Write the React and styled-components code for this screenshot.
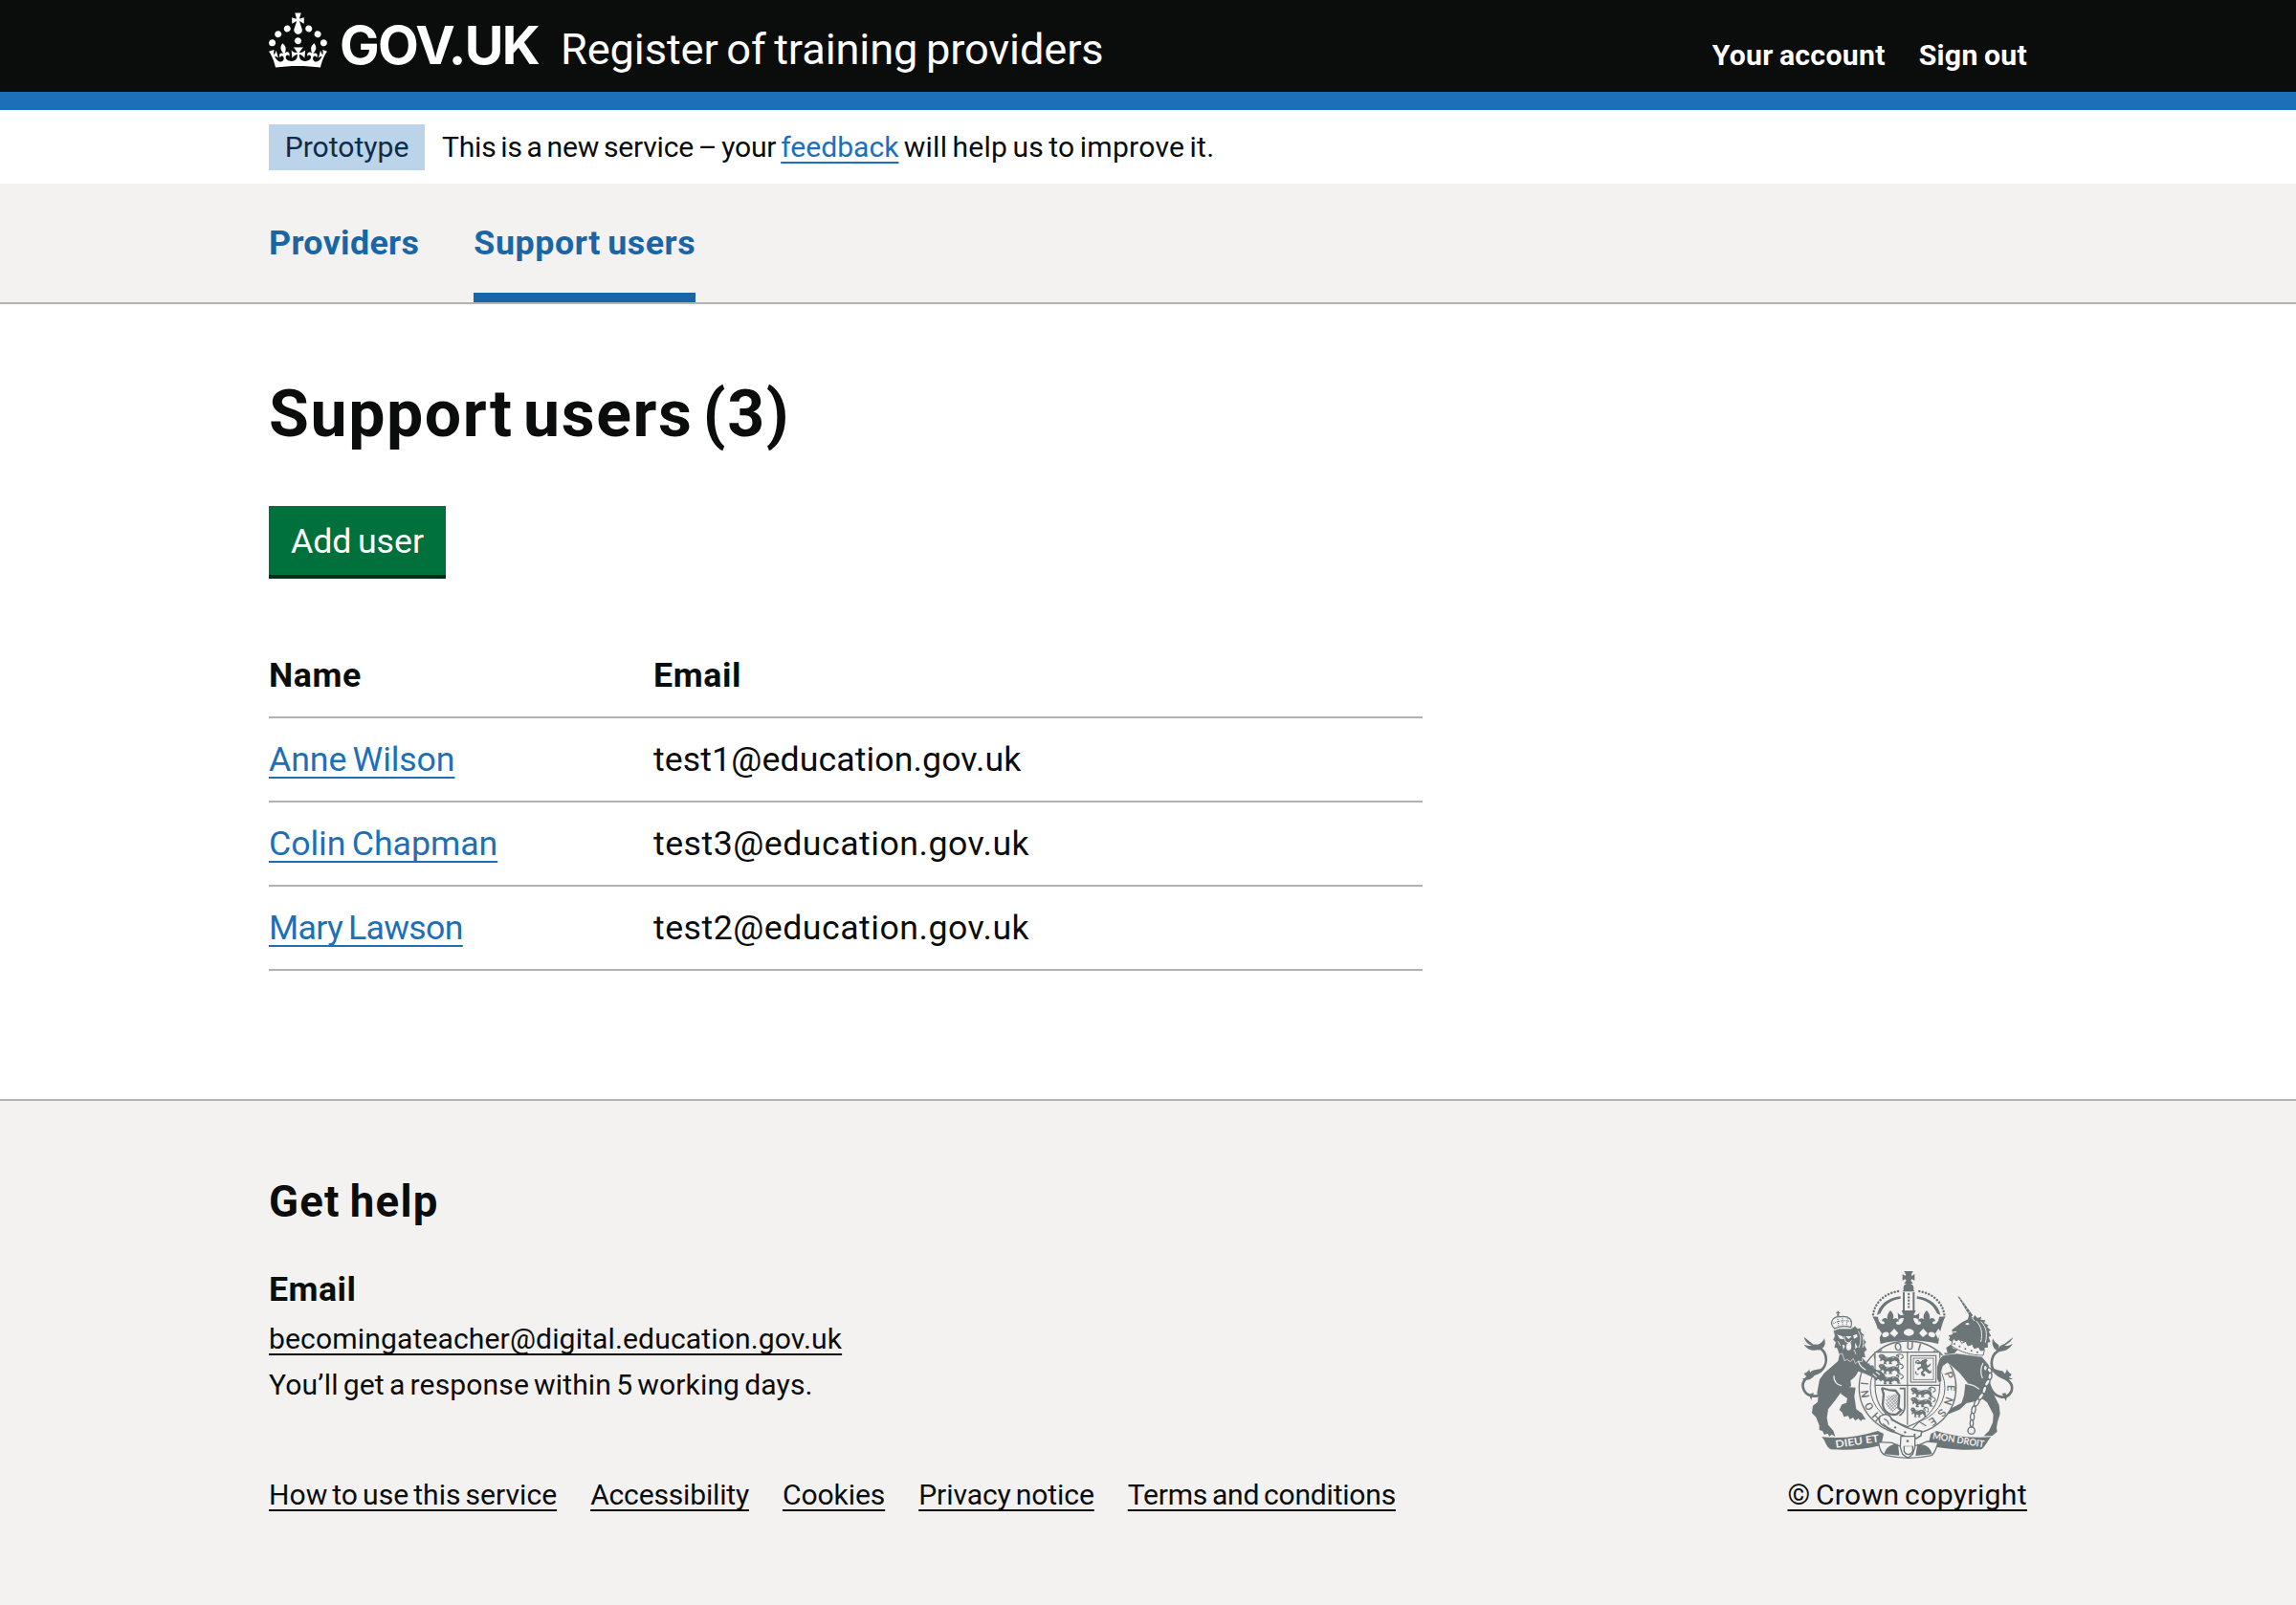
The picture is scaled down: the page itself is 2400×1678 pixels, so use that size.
import React from "react";
import styled, { createGlobalStyle, css } from "styled-components";

const colour = {
  black: "#0b0c0c",
  blue: "#1d70b8",
  navBlue: "#1a65a6",
  grey: "#f3f2f1",
  border: "#b1b4b6",
  green: "#00703c",
  crest: "#6c7578",
};

const GlobalStyle = createGlobalStyle`
  * { box-sizing: border-box; }
  body {
    margin: 0;
    background: #fff;
    color: ${colour.black};
    font-family: Roboto, "Liberation Sans", sans-serif;
    font-size: 30px;
    word-spacing: -0.08em;
    -webkit-font-smoothing: antialiased;
  }
  h1, h2, h3, p, ul { margin: 0; padding: 0; }
`;

const Page = styled.div`
  display: flex;
  flex-direction: column;
  min-height: 1678px;
`;

const Container = styled.div`
  width: 1838px;
  margin: 0 auto;
`;

const Header = styled.header`
  background: ${colour.black};
  color: #fff;
  border-bottom: 19px solid ${colour.blue};
`;

const HeaderRow = styled(Container)`
  display: flex;
  align-items: flex-start;
  height: 96px;
`;

const CrownIcon = styled.svg`
  width: 61px;
  height: 58px;
  margin-top: 13px;
  fill: #fff;
`;

const Logotype = styled.span`
  width: 227px;
  margin: 17px 0 0 13px;
  font: 700 55.6px/60px Inter, Roboto, sans-serif;
  letter-spacing: -1.6px;
  white-space: nowrap;
`;

const ServiceName = styled.span`
  margin-top: 22px;
  padding-left: 4px;
  font-size: 45.2px;
  line-height: 60px;
  letter-spacing: -0.12px;
  white-space: nowrap;
`;

const AccountNav = styled.nav`
  display: flex;
  gap: 35px;
  margin: 38px 0 0 auto;
  font-size: 30.2px;
  font-weight: 700;
  line-height: 40px;
  letter-spacing: 0.3px;
  word-spacing: -0.05em;
`;

const PhaseBanner = styled(Container)`
  display: flex;
  align-items: center;
  height: 77px;
  font-size: 30.1px;
`;

const Tag = styled.strong`
  width: 163px;
  margin-right: 18px;
  background: #bbd4ea;
  color: #0c2d4a;
  font-weight: 400;
  line-height: 48px;
  text-align: center;
`;

const Tracked = styled.span`
  letter-spacing: ${(p) => p.$track}px;
`;

const NavBar = styled.nav`
  background: ${colour.grey};
  border-bottom: 2px solid ${colour.border};
`;

const NavList = styled(Container)`
  display: flex;
  gap: 57px;
`;

const NavLink = styled.a`
  color: ${colour.navBlue};
  font-size: 35.8px;
  font-weight: 700;
  line-height: 124px;
  letter-spacing: ${(p) => (p.$current ? 0.55 : 0.35)}px;
  word-spacing: -0.06em;
  ${(p) => p.$current && css`box-shadow: inset 0 -10px ${colour.navBlue};`}
`;

const Link = styled.a`
  color: ${(p) => (p.$dark ? colour.black : colour.blue)};
  letter-spacing: ${(p) => p.$track ?? 0}px;
  text-decoration: underline;
  text-decoration-thickness: 2px;
  text-decoration-skip-ink: none;
  text-underline-offset: ${(p) => p.$offset ?? 5}px;
  white-space: nowrap;
`;

const Main = styled(Container)`
  padding: 78px 0 134px;
`;

const Title = styled.h1`
  font-size: 68px;
  font-weight: 700;
  line-height: 75px;
  letter-spacing: 1.6px;
  word-spacing: -0.12em;
`;

const Button = styled.button`
  display: block;
  width: 185px;
  height: 72px;
  margin: 58px 0 62px;
  padding: 2px 0 0;
  border: 0;
  background: ${colour.green};
  box-shadow: 0 4px 0 #002d18;
  color: #fff;
  font-family: inherit;
  font-size: 35.7px;
  word-spacing: inherit;
`;

const Table = styled.div`
  width: 1206px;
`;

const Row = styled.div`
  display: grid;
  grid-template-columns: 402px 1fr;
  height: 88px;
  border-bottom: 2px solid ${colour.border};
  font-size: 35.7px;
  line-height: 86px;
`;

const HeadCell = styled.span`
  font-weight: 700;
  letter-spacing: 0.6px;
`;

const Footer = styled.footer`
  flex: 1;
  background: ${colour.grey};
  border-top: 2px solid ${colour.border};
`;

const FooterRow = styled(Container)`
  display: flex;
  justify-content: space-between;
  align-items: flex-end;
  padding-top: 81px;
  font-size: 30.1px;
  line-height: 48px;
`;

const HelpTitle = styled.h2`
  font-size: 45.6px;
  line-height: 50px;
  letter-spacing: 1.2px;
  margin-bottom: 41px;
`;

const HelpSubtitle = styled.h3`
  font-size: 35.7px;
  line-height: 50px;
  letter-spacing: 0.5px;
  margin-bottom: 3px;
`;

const HelpText = styled.p`
  letter-spacing: 0.1px;
`;

const FooterLinks = styled.div`
  display: flex;
  gap: 35px;
  margin-top: 67px;
`;

const Copyright = styled.div`
  display: flex;
  flex-direction: column;
  align-items: center;
  gap: 9px;
`;

const CrestSvg = styled.svg`
  display: block;
  width: 230px;
  height: 205px;
`;

const Crown = () => (
  <CrownIcon viewBox="0 0 32 30" aria-hidden="true">
    <path d="M22.6 10.4c-1 .4-2-.1-2.4-1-.4-.9.1-2 1-2.4.9-.4 2 .1 2.4 1s-.1 2-1 2.4m-5.9 6.7c-.9.4-2-.1-2.4-1-.4-.9.1-2 1-2.4.9-.4 2 .1 2.4 1s-.1 2-1 2.4m10.8-3.7c-1 .4-2-.1-2.4-1-.4-.9.1-2 1-2.4.9-.4 2 .1 2.4 1s0 2-1 2.4m3.3 4.8c-1 .4-2-.1-2.4-1-.4-.9.1-2 1-2.4.9-.4 2 .1 2.4 1s-.1 2-1 2.4M17 4.7l2.3 1.2V2.5l-2.3.7-.2-.2.9-3h-3.4l.9 3-.2.2c-.1.1-2.3-.7-2.3-.7v3.4L15 4.7c.1.1.1.2.2.2l-1.3 4c-.1.2-.1.4-.1.6 0 1.1.8 2 1.9 2.2h.7c1-.2 1.9-1.1 1.9-2.1 0-.2 0-.4-.1-.6l-1.3-4c-.1-.2 0-.2.1-.3m-7.6 5.7c.9.4 2-.1 2.4-1 .4-.9-.1-2-1-2.4-.9-.4-2 .1-2.4 1s0 2 1 2.4m-5 3c.9.4 2-.1 2.4-1 .4-.9-.1-2-1-2.4-.9-.4-2 .1-2.4 1s.1 2 1 2.4m-3.2 4.8c.9.4 2-.1 2.4-1 .4-.9-.1-2-1-2.4-.9-.4-2 .1-2.4 1s0 2 1 2.4m14.8 11c4.4 0 8.6.3 12.3.8 1.1-4.5 2.4-7 3.7-8.8l-2.5-.9c.2 1.3.3 1.9 0 2.7-.4-.4-.8-1.1-1.1-2.3l-1.2 4c.7-.5 1.3-.8 2-.9-1.1 2.5-2.6 3.1-3.5 3-1.1-.2-1.7-1.2-1.5-2.1.3-1.2 1.5-1.5 2.1-.1 1.1-2.3-.8-3-2-2.3 1.9-1.9 2.1-3.5.6-5.6-2.1 1.6-2.1 3.2-1.2 5.5-1.2-1.4-3.2-.6-2.5 1.6.9-1.4 2.1-.5 1.9.8-.2 1.1-1.7 2.1-3.5 1.9-2.7-.2-2.9-2.1-2.9-3.6.7-.1 1.9.5 2.9 1.9l.4-4.3c-1.1 1.1-2.1 1.4-3.2 1.4.4-1.2 2.1-3 2.1-3h-5.4s1.7 1.9 2.1 3c-1.1 0-2.1-.2-3.2-1.4l.4 4.3c1-1.4 2.2-2 2.9-1.9-.1 1.5-.2 3.4-2.9 3.6-1.9.2-3.4-.8-3.5-1.9-.2-1.3 1-2.2 1.9-.8.7-2.3-1.2-3-2.5-1.6.9-2.2.9-3.9-1.2-5.5-1.5 2-1.3 3.7.6 5.6-1.2-.7-3.1 0-2 2.3.6-1.4 1.8-1.1 2.1.1.2.9-.3 1.9-1.5 2.1-.9.2-2.4-.5-3.5-3 .6 0 1.2.3 2 .9l-1.2-4c-.3 1.1-.7 1.9-1.1 2.3-.3-.8-.2-1.4 0-2.7l-2.9.9C1.3 23 2.6 25.5 3.7 30c3.7-.5 7.9-.8 12.3-.8" />
  </CrownIcon>
);

const fg = colour.crest;
const bg = colour.grey;

/* One passant lion of the English quarters. */
const Passant = ({ x, y, narrow }) => (
  <g transform={`translate(${x} ${y}) scale(${narrow ? 0.72 : 1} 1.1)`}>
    <path
      fill={fg}
      stroke={fg}
      d="M1 5l5-4 7 0 6 2 3 5 12 2 12-3 10 1 8 5 3 6-2 4 6 3-10 1-2-6-7-3-9 3-3 4 4 3h-10l1-7-8-1-4 5 4 3h-10l2-7-5-5-6 4-3-2 4-4-4-2z"
    />
    <path fill="none" stroke={fg} strokeWidth="3.200" d="M60 10c8-1 4-8-4-5 6-7 20-6 22 1 1 5-3 7-8 7" />
    <path fill="none" stroke={bg} strokeWidth="1.500" d="M7 5l5 2M24 12l7-1M44 11l7 0" />
  </g>
);

/* Crown above the garter. */
const RoyalCrown = () => (
  <g fill={fg}>
    <path fill={bg} d="M232 154c4-45 50-82 116-84 66 2 112 39 116 84l-18 54-6 30c-62-13-123-13-184 0l-6-30z" />
    <path d="M334 12h28l-6 12 3 2 8-5v21l-8-5-4 4 7 10h-28l7-10-4-4-8 5V21l8 5 3-2z" />
    <path d="M332 64c0-18 32-18 32 0v8l4 4h-40l4-4z" />
    <path d="M330 78h6v57h-6zM361 78h6v57h-6z" />
    <path fill="none" stroke={fg} strokeWidth="7" strokeDasharray="0.1 10" strokeLinecap="round" d="M348.500 84v50" />
    <path fill="none" stroke={fg} strokeWidth="7.500" strokeDasharray="0.1 10.300" strokeLinecap="round" d="M237 148c5-38 38-70 87-74M460 148c-5-38-38-70-87-74" />
    <path d="M249 150c5-30 32-55 74-59v7c-31 4-53 20-63 46zM448 150c-5-30-32-55-74-59v7c31 4 53 20 63 46z" />
    <path d="M232 154l20 1c2 16 9 25 20 22 3-6-2-9-8-8 2-11 13-12 18-6-3-12 3-20 9-28 8 8 13 17 8 28 7-6 17-4 19 7-7-2-11 2-8 8 9 5 21-1 23-18-6-3-12-1-17 6l-2-24c5 8 11 9 18 8l-6-15h45l-7 15c8 1 14-1 18-8l-2 24c-5-7-10-9-17-6 2 17 14 23 23 18 3-6-1-10-8-8 2-11 12-13 19-7-5-11 0-20 8-28 7 8 12 17 9 28 5-6 16-5 18 6-6-1-11 2-8 8 11 3 18-6 20-22l20-1c-8 14-12 30-18 54l-5 32c-62-15-123-15-181 0l-5-32c-5-24-12-40-20-54z" />
    <g fill={bg}>
      <path d="M254 192l10 15-9 18-9-20zM442 192l-10 15 9 18 9-20zM303 192l13 14-12 13-15-12zM394 192l-13 14 12 13 15-12z" />
      <ellipse cx="276" cy="211" rx="11" ry="8" transform="rotate(-20 276 211)" />
      <ellipse cx="349" cy="204" rx="16" ry="11" />
      <ellipse cx="421" cy="211" rx="11" ry="8" transform="rotate(20 421 211)" />
    </g>
  </g>
);

/* Lion supporter with its tail. */
const Lion = () => (
  <g>
    <path fill="none" stroke={fg} strokeWidth="8" d="M84 388c-22 26-58 18-66-8-7-23 8-36 36-46 30-12 39-34 34-56-3-14-13-23-26-28" />
    <path fill={fg} d="M20 218c4 16 14 24 26 28-10 1-18-1-26-4 11 17 27 21 45 17l13-5c-5-11-17-14-28-12zM66 260c16-6 25-15 18-38-4 12-13 17-22 21zM14 348c9 7 27 8 40-10-11-3-18-11-17-20-3 9-9 12-17 15 3 6 7 9 12 11-6 4-12 5-18 4zM34 338c21 3 42-1 54-28-15 12-32 10-44 15zM40 396c-3 8-1 16 4 20-1-9 4-15 8-22z" />
    <path fill={fg} d="M134 262l62 14 20 22 28 22 16 4 14 14-2 14-8-6-2 10-10-6-6 6-8-10-30-14-18-6c-6 14-14 22-24 29l2 18-24 8-26 36-22 28-4 27 4 22 16 18 6 18-11-6-7 6-6-9-10 4-6-12-10-3 0-14-10-26-13-13 3-23 15-12 2-18-4-10 8-42 14-20 44-38z" />
    <path fill={fg} d="M132 373l50 4-4 28 6 40 18 13 12 20-10-2-5 6-9-8-9 7-7-10-10 6-5-11-14 3-5-14-9-8 8-17 14-5 3-14-20-14z" />
    <path fill="none" stroke={bg} strokeWidth="3.500" d="M114 340c-1 20 12 30 24 31M190 288c0 18 10 26 24 34M236 334l12 10M246 328l12 9" />
    <path fill={fg} stroke={bg} strokeWidth="2" d="M112 198l18-6 38 0 12-8 8 8 10-2 2 14 10 8-4 10 10 12-6 10 8 14-8 8 4 18-10-2-2 14-12-2-8 8-8-16-8 10-12-8-6 6-8-24-10 3-7-20-9 0 5-18-8-8 5-12z" />
    <path fill={bg} d="M124 211l16 5 6 9-13-1zM150 216l20 0-10 9zM166 234c6 18 2 28-9 26-6-5-6-14-2-20l4-3zM174 214l12-5 2 9-11 6zM140 242l9 3-5 14zM180 236l8 14-7 6z" />
    <path fill="none" stroke={bg} strokeWidth="2.500" d="M190 200c10 15 10 34 2 52M203 212c5 14 5 28 1 40M127 232l7 14M177 258l6 14M145 216l5 17 12 4 8-8" />
    <g fill="none" stroke={fg} strokeWidth="3.500">
      <path fill={bg} d="M116 192c-18-16-8-38 17-37 28-4 42 8 34 33-16-5-34-4-51 4z" />
      <path strokeDasharray="3 3" d="M141 158v26M126 162l3 24M157 160l-4 24M112 176c16-9 38-11 56-6" />
    </g>
    <path fill={fg} d="M123 152l2-8-4 1v-5l4 1-1-4h6l-1 4 4-1v5l-4-1 2 8z" />
  </g>
);

/* Unicorn supporter with collar, chain and tail. */
const Unicorn = () => (
  <g>
    <path fill="none" stroke={fg} strokeWidth="8" d="M604 376c14 36 52 40 66 14 9-23-5-36-29-46-28-13-36-34-31-56 4-17 14-25 28-29" />
    <path fill={fg} d="M676 219c-7 15-17 20-27 27 9 1 18-2 25-6-8 15-21 22-35 23l-11-4c4-13 13-16 21-19zM628 262c-15-6-20-20-16-39 5 12 13 14 20 22zM677 349c-12 6-28 3-38-9 10-4 17-12 17-22 3 9 8 14 15 17-1 4-5 8-9 9 6 4 11 5 15 5zM652 340c-20 0-37-8-46-29 13 11 28 11 39 15zM652 394c6 10 5 18 0 26-2-11-6-18-12-24z" />
    <path fill={fg} d="M502 91l6 2 42 58-8 6z" />
    <path fill="none" stroke={bg} strokeWidth="2" d="M506 104l7-6M513 113l7-6M520 123l7-6M527 133l7-6M534 143l7-6" />
    <path fill={fg} d="M484 196l32-24 18-9 4-15 12 11 6-9 8 9 12-4-2 9 15 2-4 8 14 8-5 5 12 10-7 4 8 14-8 3 6 16-9 2 1 15-10 1-4 20-34-6c-6-16-20-30-36-36l-14 2-12-2-4 3-9-6 4-7-5-6 13-4z" />
    <path fill="none" stroke={bg} strokeWidth="3" d="M560 168c16 15 21 38 15 66M575 170c18 18 20 40 14 66M547 158l8 10M484 204l14-2" />
    <path fill={bg} d="M526 178c4-5 10-5 13 0-4 3-9 4-13 0z" />
    <path fill={bg} stroke={fg} strokeWidth="3" d="M488 222l9 9 10-6 8 13 13-6 6 14 14-5 6 13 14-4 6 11 12-2-4 17c-38 0-70-10-100-30z" />
    <g fill={fg}>
      <circle cx="492" cy="240" r="3" />
      <circle cx="508" cy="248" r="3" />
      <circle cx="526" cy="256" r="3" />
      <circle cx="545" cy="262" r="3" />
      <circle cx="564" cy="266" r="3" />
    </g>
    <path fill={fg} d="M466 252l14-10 8 12 14 4-10 12-20 6zM460 268l18 2-14 12z" />
    <path fill={fg} stroke={bg} strokeWidth="2" d="M500 270l78 10 22 26 6 30-6 44-14 8-48-18-30-38-20-18-18-14-14 10-6 22 2 24-8 8-8-16 0-34 8-26 12-12 24-4z" />
    <path fill={fg} d="M526 366l56 16-8 22-16 16-28 6-22 20-34 14-4-3 10-14 34-18 8-24z" />
    <path fill={fg} d="M572 372l32-10 10 34 18 36 3 27-8 26-3 18 2 12-16 14h-26l16-16 12-26 2-26-20-38-22-16z" />
    <path fill="none" stroke={bg} strokeWidth="3.500" d="M582 300c-10 18-8 34-2 48M536 366c14 2 24 8 34 16" />
    <g fill={bg} stroke={fg} strokeWidth="4">
      <ellipse cx="589" cy="316" rx="6" ry="9" />
      <ellipse cx="602" cy="323" rx="6" ry="9" transform="rotate(-35 602 323)" />
      <ellipse cx="603" cy="342" rx="6" ry="11" transform="rotate(8 603 342)" />
      <ellipse cx="595" cy="362" rx="6" ry="12" transform="rotate(30 595 362)" />
      <ellipse cx="586" cy="384" rx="6" ry="12" transform="rotate(18 586 384)" />
      <ellipse cx="575" cy="405" rx="6" ry="12" transform="rotate(35 575 405)" />
      <ellipse cx="562" cy="424" rx="6" ry="12" transform="rotate(28 562 424)" />
      <ellipse cx="552" cy="447" rx="6" ry="12" transform="rotate(10 552 447)" />
      <ellipse cx="548" cy="469" rx="6" ry="12" />
      <ellipse cx="546" cy="489" rx="5" ry="11" />
      <circle cx="545" cy="512" r="11" />
    </g>
  </g>
);

/* Garter with its motto, the quartered shield and the buckle. */
const Shield = () => (
  <g>
    <ellipse cx="345" cy="377" rx="152" ry="146" fill={bg} stroke={fg} strokeWidth="4" />
    <ellipse cx="345" cy="377" rx="117" ry="112" fill="none" stroke={fg} strokeWidth="3" />
    <defs>
      <path id="garter-left" d="M265 468A124 119 0 0 1 274 280" />
      <path id="garter-top" d="M262 288A123 118 0 0 1 440 302" />
      <path id="garter-right" d="M460 332A124 119 0 0 1 397 485" />
    </defs>
    <g fill={fg} fontFamily="Roboto, sans-serif" fontSize="34" fontWeight="500" wordSpacing="0">
      <text>
        <textPath href="#garter-left" textLength="212" lengthAdjust="spacing">HONI SO</textPath>
      </text>
      <text>
        <textPath href="#garter-top" textLength="190" lengthAdjust="spacing">T QUI M</textPath>
      </text>
      <text>
        <textPath href="#garter-right" textLength="170" lengthAdjust="spacing">PENSE</textPath>
      </text>
    </g>
    <path fill={bg} stroke={fg} strokeWidth="3.500" d="M243 266h203v104c0 64-38 108-101 130-64-22-102-66-102-130z" />
    <path fill="none" stroke={fg} strokeWidth="3.500" d="M344.500 266v228M243 370h203" />
    <Passant x={253} y={272} />
    <Passant x={253} y={303} />
    <Passant x={253} y={335} />
    <Passant x={354} y={376} />
    <Passant x={354} y={407} />
    <Passant x={354} y={439} narrow />
    <rect x="355" y="277" width="79" height="83" fill="none" stroke={fg} strokeWidth="3.500" />
    <rect x="363" y="285" width="63" height="67" fill="none" stroke={fg} strokeWidth="2.500" />
    <path fill={fg} d="M391 291l12-4 5 5-5 7 4 9 12-7-4 9-9 6 9 10 3-5 2 9-8 4-12-9-7 6 8 5-4 7-8-4-3-9 8-8-6-6-10 7-4-5 13-8 0-7-12 1-3-6 12-1z" />
    <path fill="none" stroke={fg} strokeWidth="3.500" d="M371 302c-3-12 12-13 11-4M372 326c-5 5 1 13 7 8" />
    <path fill="none" stroke={fg} strokeWidth="7" d="M264 378l6 20-3 32c3 22 20 36 44 31l14-13-9-8 3-38-12-16c-15 2-25-2-43-8" />
    <path fill="none" stroke={fg} strokeWidth="5" d="M320 380h16v57c0 14-8 22-17 28" />
    <path fill="none" stroke={fg} strokeWidth="1.800" d="M279 404l32 38M276 414l30 34M276 425l24 28M286 402l30 34M293 401l24 28M300 400l18 22M307 399l10 14M279 430l37-33M281 438l36-31M285 444l32-28M290 449l27-25M297 452l20-18M279 419l28-22" />
    <path fill={bg} stroke={fg} strokeWidth="4.500" d="M258 468c14-12 34-8 37 10 30 17 57 33 94 36l-2 14-15 9c-40-3-76-22-107-43-9-7-12-15-7-26z" />
    <path fill="none" stroke={fg} strokeWidth="3.500" d="M271 475c9 3 15 10 14 19M361 505l20-21 22 13M268 490c12 13 27 19 37 23" />
    <g fill={fg}>
      <circle cx="306" cy="502" r="3.500" />
      <circle cx="337" cy="517" r="3.500" />
      <circle cx="367" cy="525" r="3.500" />
    </g>
  </g>
);

const Scroll = () => (
  <g>
    <path fill={fg} d="M75 532c62 6 118 0 177-19l18 9-8 36c-54 13-103 17-158 13-16-8-15-27-29-39zM607 532c-62 4-116-2-171-19l-18 9-9 36c58 13 112 17 167 13 14-10 19-27 31-39z" />
    <path fill={bg} stroke={fg} strokeWidth="4" d="M254 548c2 22 8 37 23 42 45 10 100 10 143 0 12-7 14-24 21-41l-34-3-24 10-18 4h-47l-22-10z" />
    <path fill={fg} d="M272 586c3-20 20-33 43-32l4 36zM422 586c-4-20-20-32-46-32l-6 37z" />
    <path fill={bg} stroke={fg} strokeWidth="4" d="M324 530h44v34l-7 22-15 12-17-12-7-22zM334 560v17c5 13 22 13 27 0v-17" />
    <circle cx="345" cy="545" r="4" fill={fg} />
    <g fill={bg} fontFamily="Lato, Roboto, sans-serif" fontWeight="700" wordSpacing="0">
      <text transform="translate(120 566) rotate(-8)" fontSize="32" textLength="138" lengthAdjust="spacingAndGlyphs">DIEU ET</text>
      <text transform="translate(422 538) rotate(9.500)" fontSize="30" textLength="164" lengthAdjust="spacingAndGlyphs">MON DROIT</text>
    </g>
  </g>
);

const Crest = () => (
  <CrestSvg viewBox="0 0 690 615" aria-hidden="true">
    <Shield />
    <RoyalCrown />
    <Lion />
    <Unicorn />
    <Scroll />
  </CrestSvg>
);

const users = [
  { name: "Anne Wilson", email: "test1@education.gov.uk", nameTrack: -0.1, emailTrack: 0.1 },
  { name: "Colin Chapman", email: "test3@education.gov.uk", nameTrack: -0.05, emailTrack: 0.5 },
  { name: "Mary Lawson", email: "test2@education.gov.uk", nameTrack: -0.68, emailTrack: 0.5 },
];

const footerLinks = [
  { label: "How to use this service", track: 0 },
  { label: "Accessibility", track: -0.2 },
  { label: "Cookies", track: -0.1 },
  { label: "Privacy notice", track: -0.1 },
  { label: "Terms and conditions", track: -0.24 },
];

export default function App() {
  return (
    <Page>
      <GlobalStyle />
      <Header>
        <HeaderRow>
          <Crown />
          <Logotype>GOV.UK</Logotype>
          <ServiceName>Register of training providers</ServiceName>
          <AccountNav>
            <span>Your account</span>
            <span>Sign out</span>
          </AccountNav>
        </HeaderRow>
      </Header>
      <PhaseBanner>
        <Tag>Prototype</Tag>
        <p>
          <Tracked $track={-0.22}>This is a new service – your </Tracked>
          <Link>feedback</Link>
          <Tracked $track={0.23}> will help us to improve it.</Tracked>
        </p>
      </PhaseBanner>
      <NavBar>
        <NavList>
          <NavLink>Providers</NavLink>
          <NavLink $current>Support users</NavLink>
        </NavList>
      </NavBar>
      <Main as="main">
        <Title>Support users (3)</Title>
        <Button>Add user</Button>
        <Table>
          <Row>
            <HeadCell>Name</HeadCell>
            <HeadCell>Email</HeadCell>
          </Row>
          {users.map((u) => (
            <Row key={u.email}>
              <span>
                <Link $offset={6} $track={u.nameTrack}>{u.name}</Link>
              </span>
              <Tracked $track={u.emailTrack}>{u.email}</Tracked>
            </Row>
          ))}
        </Table>
      </Main>
      <Footer>
        <FooterRow>
          <div>
            <HelpTitle>Get help</HelpTitle>
            <HelpSubtitle>Email</HelpSubtitle>
            <p>
              <Link $dark $track={0.12}>becomingateacher@digital.education.gov.uk</Link>
            </p>
            <HelpText>You’ll get a response within 5 working days.</HelpText>
            <FooterLinks>
              {footerLinks.map((l) => (
                <Link $dark key={l.label} $track={l.track}>{l.label}</Link>
              ))}
            </FooterLinks>
          </div>
          <Copyright>
            <Crest />
            <Link $dark $track={0.36}>© Crown copyright</Link>
          </Copyright>
        </FooterRow>
      </Footer>
    </Page>
  );
}
